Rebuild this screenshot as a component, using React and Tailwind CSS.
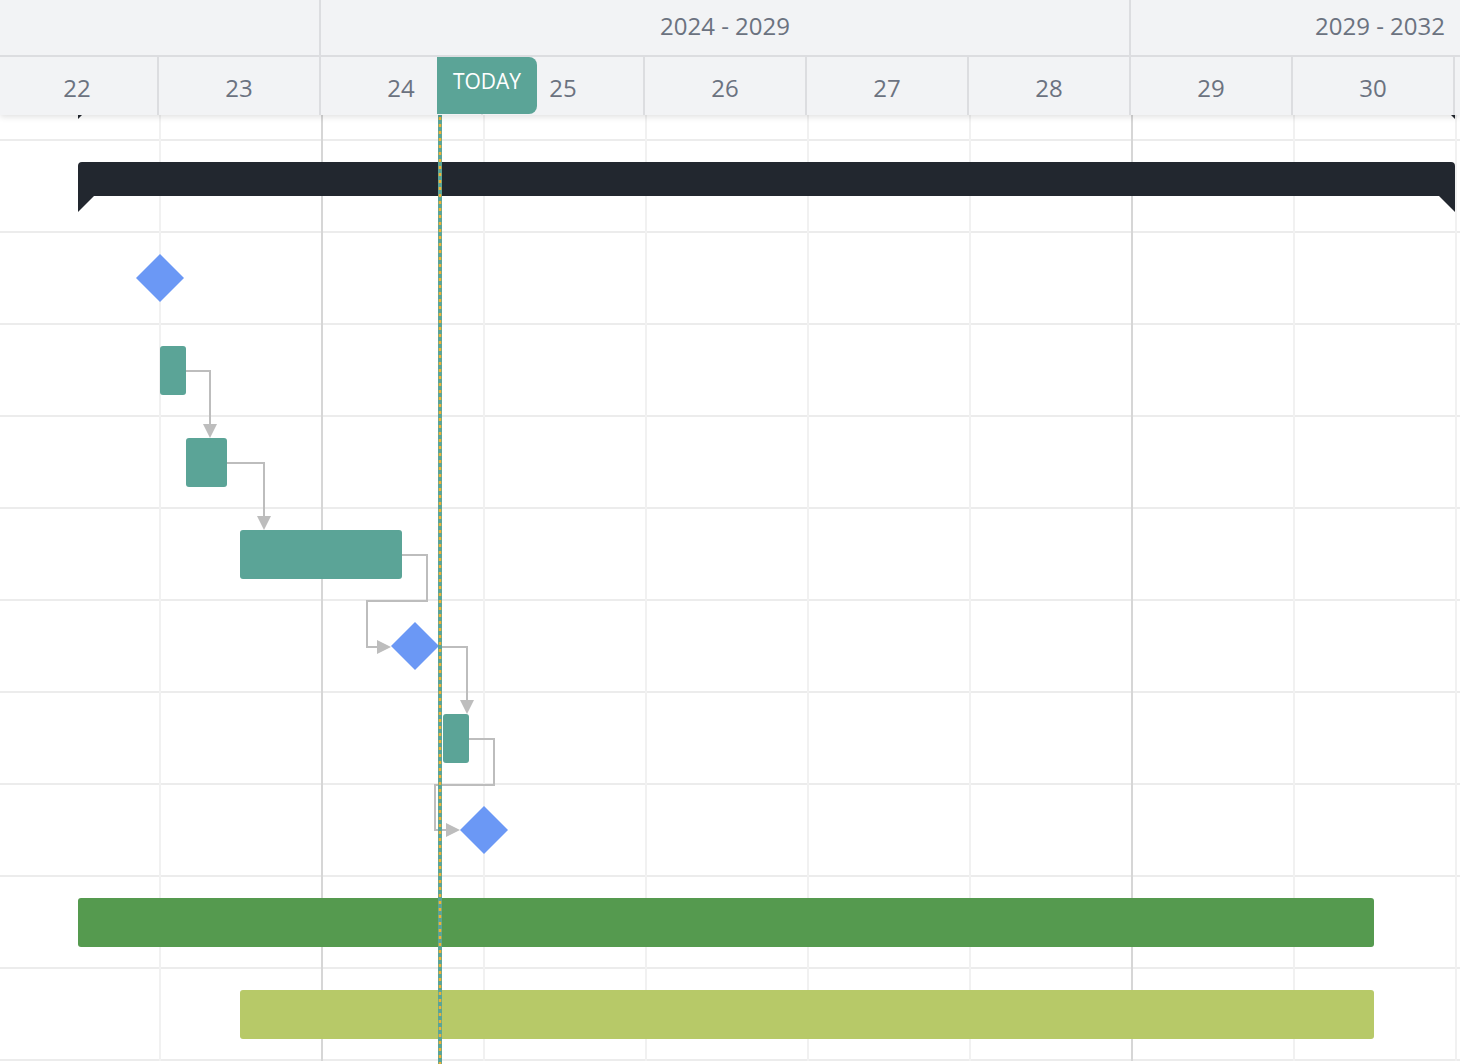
export default function App() {
  const days = ["22","23","24","25","26","27","28","29","30"];
  const rows = [26,92,92,92,92,92,92,92,92,92,92];
  const minor = [159,483,645,807,969,1293,1455];
  const major = [321,1131];
  const font = { fontFamily: '"Open Sans", sans-serif' };
  return (
    <div className="relative w-[1460px] h-[1064px] overflow-hidden bg-white" style={font}>
      {/* header */}
      <div className="relative z-20 bg-[#f2f3f5] shadow-[0_2px_6px_rgba(0,0,0,0.12)]">
        <div className="flex h-[57px] border-b-2 border-[#dcdde0] text-[24px] text-[#6b7280]">
          <div className="w-[321px] border-r-2 border-[#dcdde0]" />
          <div className="w-[810px] border-r-2 border-[#dcdde0] flex items-center justify-center pb-1">2024 - 2029</div>
          <div className="flex-1 flex items-center justify-end pr-[15px] pb-1">2029 - 2032</div>
        </div>
        <div className="flex h-[58px] ml-[-3px] text-[24px] text-[#6b7280]">
          {days.map((d) => (
            <div key={d} className="w-[162px] shrink-0 border-r-2 border-[#dcdde0] flex items-center justify-center pt-1">{d}</div>
          ))}
        </div>
        <div className="absolute left-[437px] top-[57px] w-[100px] h-[57px] bg-[#5ba497] rounded-r-[8px] text-white text-[21px] flex justify-center pt-[9px]">TODAY</div>
      </div>
      {/* body rows */}
      <div className="relative">
        {rows.map((h, i) => (
          <div key={i} style={{ height: h }} className="border-b-2 border-[#ececec]" />
        ))}
        {minor.map((x) => (
          <div key={x} style={{ left: x }} className="absolute top-0 bottom-0 w-[2px] bg-[#f1f1f1]" />
        ))}
        {major.map((x) => (
          <div key={x} style={{ left: x }} className="absolute top-0 bottom-0 w-[2px] bg-[#d6d6d6]" />
        ))}
      </div>
      {/* canvas items */}
      <svg className="absolute left-0 top-0 z-10" width="1460" height="1064">
        {/* summary bar */}
        <path d="M78 166 Q78 162 82 162 L1451 162 Q1455 162 1455 166 L1455 212 L1439 196 L94 196 L78 212 Z" fill="#22272f" />
        <path d="M78 115 L82 115 L78 119 Z" fill="#22272f" />
        <path d="M1455 115 L1451 115 L1455 119 Z" fill="#22272f" />
        {/* connectors */}
        <g fill="none" stroke="#bdbdbd" strokeWidth="2">
          <path d="M186 371 H210 V428" />
          <path d="M227 463 H264 V520" />
          <path d="M402 555 H427 V601 H367 V647 H381" />
          <path d="M439 647 H467 V704" />
          <path d="M469 739 H494 V785 H435 V830 H450" />
        </g>
        <g fill="#bdbdbd">
          <path d="M203 424 L217 424 L210 438 Z" />
          <path d="M257 516 L271 516 L264 530 Z" />
          <path d="M377 640 L391 647 L377 654 Z" />
          <path d="M460 700 L474 700 L467 714 Z" />
          <path d="M446 823 L460 830 L446 837 Z" />
        </g>
        {/* diamonds */}
        <g fill="#6b98f5">
          <path d="M160 254 L184 278 L160 302 L136 278 Z" />
          <path d="M415 622 L439 646 L415 670 L391 646 Z" />
          <path d="M484 806 L508 830 L484 854 L460 830 Z" />
        </g>
        {/* tasks */}
        <g fill="#5ba497">
          <rect x="160" y="346" width="26" height="49" rx="3" />
          <rect x="186" y="438" width="41" height="49" rx="3" />
          <rect x="240" y="530" width="162" height="49" rx="3" />
          <rect x="443" y="714" width="26" height="49" rx="3" />
        </g>
        <rect x="78" y="898" width="1296" height="49" rx="3" fill="#559a4f" />
        <rect x="240" y="990" width="1134" height="49" rx="3" fill="#b7c968" />
        {/* today line */}
        <rect x="438" y="115" width="4" height="949" fill="#5ba497" />
        <line x1="440" y1="117" x2="440" y2="1064" stroke="#f2b233" strokeWidth="2.5" strokeDasharray="3 4" />
      </svg>
    </div>
  );
}
